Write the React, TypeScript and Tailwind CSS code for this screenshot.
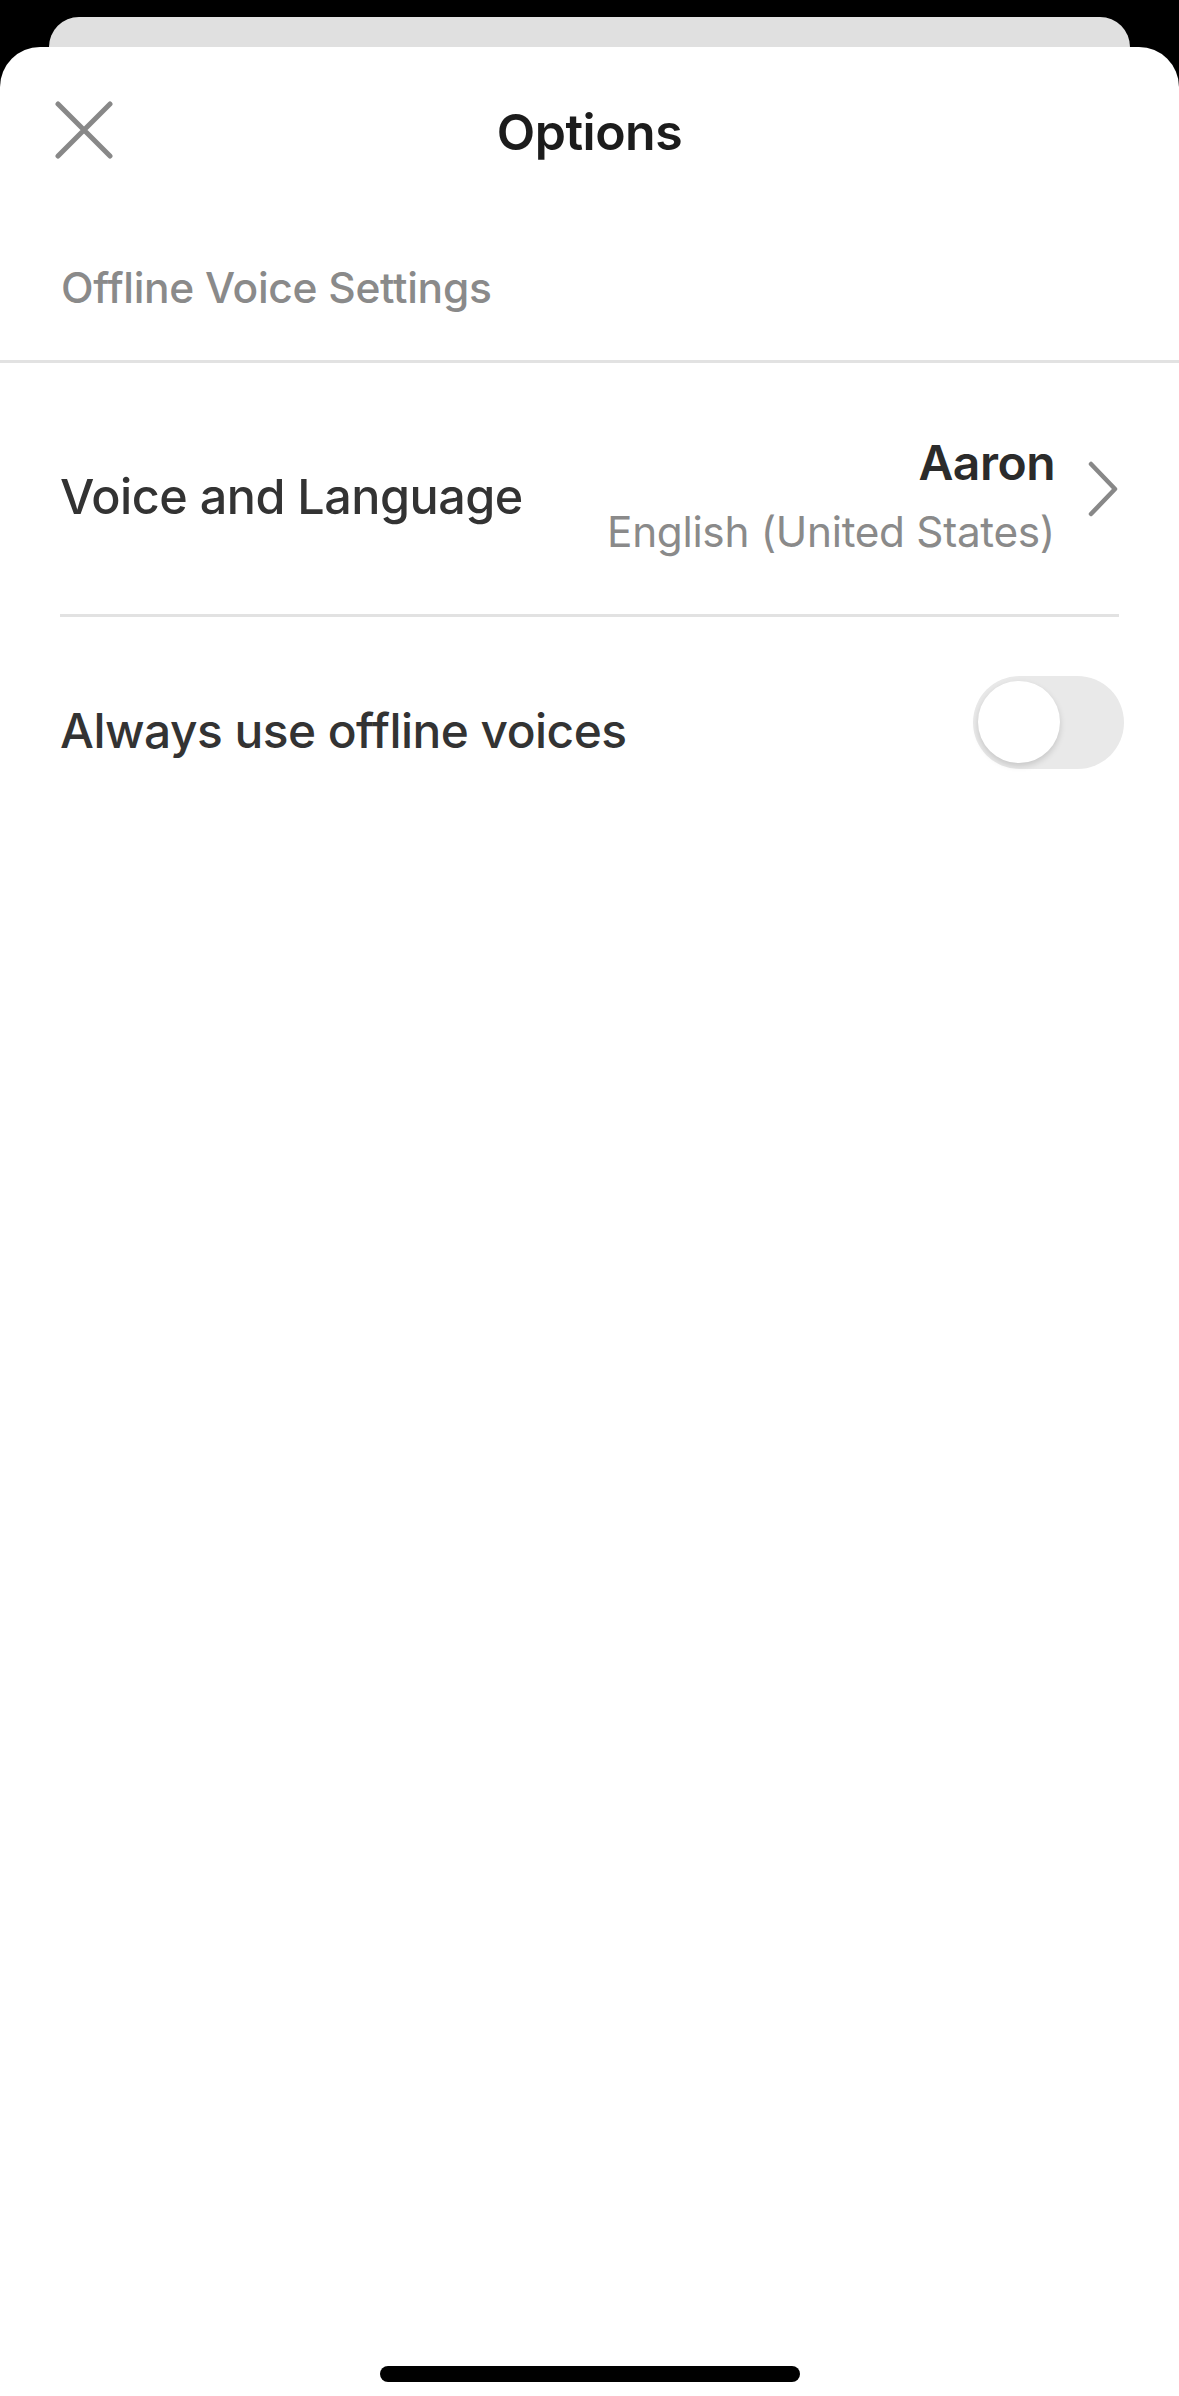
import React from "react";

export default function App() {
  return (
    <div className="flex h-[2396px] w-full flex-col bg-black" style={{ fontFamily: "Inter, 'Noto Sans', sans-serif" }}>
      <div className="mx-[49px] mt-[17px] h-[30px] shrink-0 rounded-t-[34px] bg-[#e0e0e0]" />
      <div className="flex flex-1 flex-col rounded-t-[40px] bg-white">
        <div className="relative flex h-[168px] shrink-0 items-center justify-center">
          <button className="absolute left-[55px] top-[54px] flex h-[58px] w-[58px] items-center justify-center">
            <svg width="58" height="58" viewBox="0 0 58 58" fill="none">
              <path d="M3 3 L55 55 M55 3 L3 55" stroke="#888888" strokeWidth="5" strokeLinecap="round" />
            </svg>
          </button>
          <span className="pt-[2px] text-[50px] font-semibold tracking-[-0.5px] text-[#1c1c1c]">Options</span>
        </div>
        <div className="flex h-[148px] shrink-0 items-center border-b-[3px] border-[#e2e2e2] pl-[61px]">
          <span className="text-[42.5px] font-medium tracking-[-0.3px] text-[#8a8a8a]">Offline Voice Settings</span>
        </div>
        <div className="mx-[60px] flex h-[254px] shrink-0 items-center justify-between border-b-[3px] border-[#e2e2e2] pt-[18px]">
          <span className="text-[48.5px] font-medium tracking-[-0.5px] text-[#333333]">Voice and Language</span>
          <div className="flex items-center gap-[32px]">
            <div className="flex flex-col items-end">
              <span className="text-[48px] font-semibold leading-[68px] tracking-[-0.5px] text-[#2b2b2b]">Aaron</span>
              <span className="text-[42.3px] leading-[70px] tracking-[-0.3px] text-[#8a8a8a]">English (United States)</span>
            </div>
            <svg width="32" height="58" viewBox="0 0 32 58" fill="none" className="-mt-[18px]">
              <path d="M4 4 L28 29 L4 54" stroke="#888888" strokeWidth="4.5" strokeLinecap="round" strokeLinejoin="round" />
            </svg>
          </div>
        </div>
        <div className="mx-[60px] flex h-[230px] shrink-0 items-center justify-between">
          <span className="text-[47.8px] font-medium tracking-[-0.5px] text-[#333333]">Always use offline voices</span>
          <div className="-mr-[5px] mb-[20px] flex h-[93px] w-[151px] items-center rounded-full bg-[#e9e9e9] p-[5px]">
            <div className="h-[82px] w-[82px] rounded-full bg-white shadow-[0_3px_6px_rgba(0,0,0,0.15)]" />
          </div>
        </div>
        <div className="flex-1" />
        <div className="mb-[14px] flex shrink-0 justify-center">
          <div className="h-[16px] w-[420px] rounded-full bg-black" />
        </div>
      </div>
    </div>
  );
}
